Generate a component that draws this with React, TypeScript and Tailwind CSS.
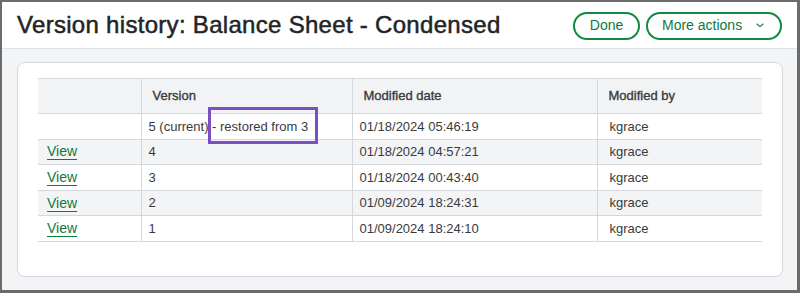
import React from 'react';

type VersionRow = {
  version: string;
  date: string;
  user: string;
  viewable: boolean;
};

const rows: VersionRow[] = [
  { version: '5 (current) - restored from 3', date: '01/18/2024 05:46:19', user: 'kgrace', viewable: false },
  { version: '4', date: '01/18/2024 04:57:21', user: 'kgrace', viewable: true },
  { version: '3', date: '01/18/2024 00:43:40', user: 'kgrace', viewable: true },
  { version: '2', date: '01/09/2024 18:24:31', user: 'kgrace', viewable: true },
  { version: '1', date: '01/09/2024 18:24:10', user: 'kgrace', viewable: true },
];

const ChevronDown = () => (
  <svg width="8" height="5" viewBox="0 0 8 5" fill="none" aria-hidden="true">
    <path d="M1 1l3 2.6L7 1" stroke="#0d7a3e" strokeWidth="1.1" strokeLinecap="round" strokeLinejoin="round" />
  </svg>
);

export default function App() {
  return (
    <div
      className="w-[800px] h-[293px] border-t-2 border-l-2 border-r-[3px] border-b-[3px] border-[#6b6b6b] bg-[#f3f4f6] flex flex-col text-[#393a3d]"
      style={{ fontFamily: '"Liberation Sans", Arial, sans-serif' }}
    >
      <header className="h-[47px] shrink-0 bg-white border-b border-[#dfe2e6] flex items-center justify-between px-[15px]">
        <h1 className="text-[24px] tracking-[0.3px] text-[#232426] font-normal leading-none [-webkit-text-stroke:0.5px_#232426]">
          Version history: Balance Sheet - Condensed
        </h1>
        <div className="flex items-center gap-[6px] mt-[1px]">
          <button
            type="button"
            className="h-[28px] w-[67px] rounded-full border-2 border-[#108a3e] text-[14px] text-[#0d7a3e] flex items-center justify-center"
          >
            Done
          </button>
          <button
            type="button"
            className="h-[28px] w-[136px] rounded-full border-2 border-[#108a3e] text-[14px] text-[#0d7a3e] flex items-center pl-[14px] pr-[16px] justify-between"
          >
            <span>More actions</span>
            <ChevronDown />
          </button>
        </div>
      </header>

      <main className="flex-1 pt-[13px] pb-[13px] pl-[15px] pr-[14px] flex">
        <div className="flex-1 bg-white border border-[#d4d7dc] rounded-[8px] pt-[15px] px-[20px]">
          <div className="relative">
            <table className="w-[724px] table-fixed border-collapse text-[13px]">
              <colgroup>
                <col className="w-[103px]" />
                <col className="w-[211px]" />
                <col className="w-[245px]" />
                <col />
              </colgroup>
              <thead>
                <tr className="h-[35px] bg-[#f1f3f5] border-t border-b border-[#d4d7dc]">
                  <th className="border-r border-[#d4d7dc]"></th>
                  <th className="text-left font-normal [-webkit-text-stroke:0.35px_#393a3d] pl-[11px] border-r border-[#d4d7dc]">Version</th>
                  <th className="text-left font-normal [-webkit-text-stroke:0.35px_#393a3d] pl-[11px] border-r border-[#d4d7dc]">Modified date</th>
                  <th className="text-left font-normal [-webkit-text-stroke:0.35px_#393a3d] pl-[11px]">Modified by</th>
                </tr>
              </thead>
              <tbody>
                {rows.map((row, idx) => (
                  <tr
                    key={idx}
                    className={`h-[25.6px] border-b border-[#d4d7dc] ${idx % 2 === 1 ? 'bg-[#f3f4f6]' : 'bg-white'}`}
                  >
                    <td className="pl-[9px] border-r border-[#d4d7dc]">
                      {row.viewable && (
                        <a href="#" className="text-[14px] text-[#0d7a3e] underline underline-offset-[3px]">
                          View
                        </a>
                      )}
                    </td>
                    <td className="pl-[7px] border-r border-[#d4d7dc]">{row.version}</td>
                    <td className="pl-[7px] border-r border-[#d4d7dc]">{row.date}</td>
                    <td className="pl-[12px]">{row.user}</td>
                  </tr>
                ))}
              </tbody>
            </table>
            {/* annotation box around "restored from 3" */}
            <div className="absolute left-[170px] top-[29px] w-[110px] h-[37px] border-[3px] border-[#7b4fc2] pointer-events-none" />
          </div>
        </div>
      </main>
    </div>
  );
}
